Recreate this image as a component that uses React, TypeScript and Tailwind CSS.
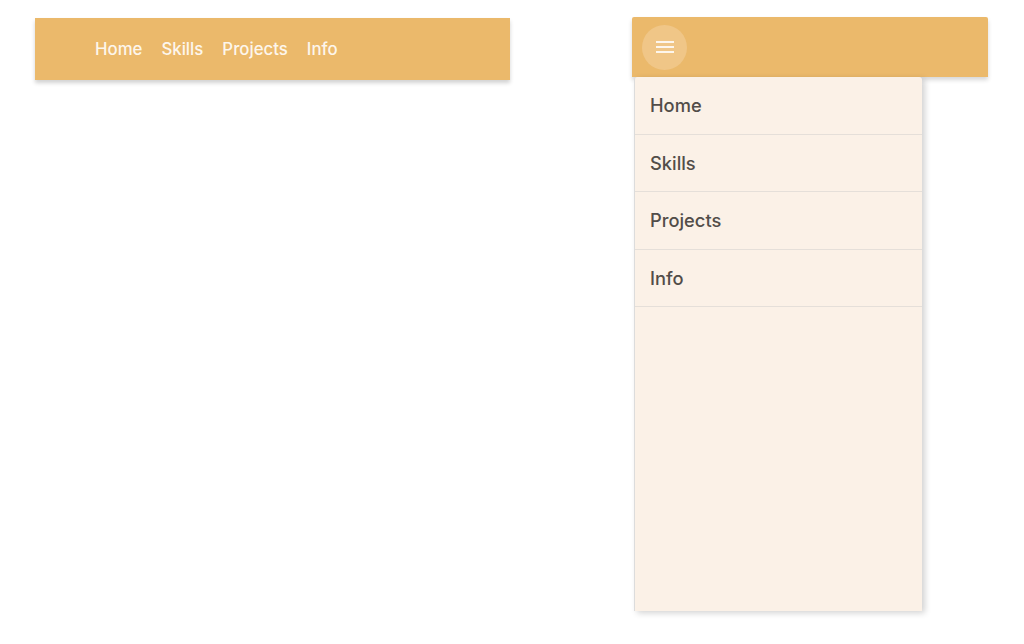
export default function App() {
	const links = ["Home", "Skills", "Projects", "Info"];

	return (
		<div
			className="flex h-[644px] w-[1024px] bg-white"
			style={{ fontFamily: "Inter, 'Noto Sans', sans-serif" }}>
			<div className="ml-[35px] mt-[18px] w-[475px]">
				<nav className="flex h-[62px] items-center gap-[19px] bg-[#ebb96b] pl-[60px] pt-[2px] shadow-[0_3px_4px_rgba(0,0,0,0.18)]">
					{links.map((l) => (
						<a
							key={l}
							className="text-[16.8px] font-medium text-[#fdf6ec]">
							{l}
						</a>
					))}
				</nav>
			</div>

			<div className="ml-[122px] mt-[17px] flex w-[356px] flex-col">
				<header className="relative z-0 flex h-[60px] items-center rounded-t-[2px] bg-[#ebb96b] pl-[10px] shadow-[0_3px_4px_rgba(0,0,0,0.16)]">
					<button className="flex h-[45px] w-[45px] items-center justify-center rounded-full bg-[#f0c687]">
						<svg width="18" height="14" viewBox="0 0 18 14">
							<rect x="0" y="1" width="18" height="2" fill="#fdf6ec" />
							<rect x="0" y="6" width="18" height="2" fill="#fdf6ec" />
							<rect x="0" y="11" width="18" height="2" fill="#fdf6ec" />
						</svg>
					</button>
				</header>
				<aside className="relative z-10 ml-[2px] flex h-[534px] w-[288px] flex-col rounded-t-[3px] border-l border-[#dcdcdc] bg-[#fbf1e7] shadow-[3px_2px_6px_rgba(0,0,0,0.18)]">
					{links.map((l) => (
						<div
							key={l}
							className="flex h-[57.5px] items-center border-b border-[#e5dfd9] pl-[15px] pt-[1px] text-[18.3px] font-medium text-[#524d49]">
							{l}
						</div>
					))}
				</aside>
			</div>
		</div>
	);
}
